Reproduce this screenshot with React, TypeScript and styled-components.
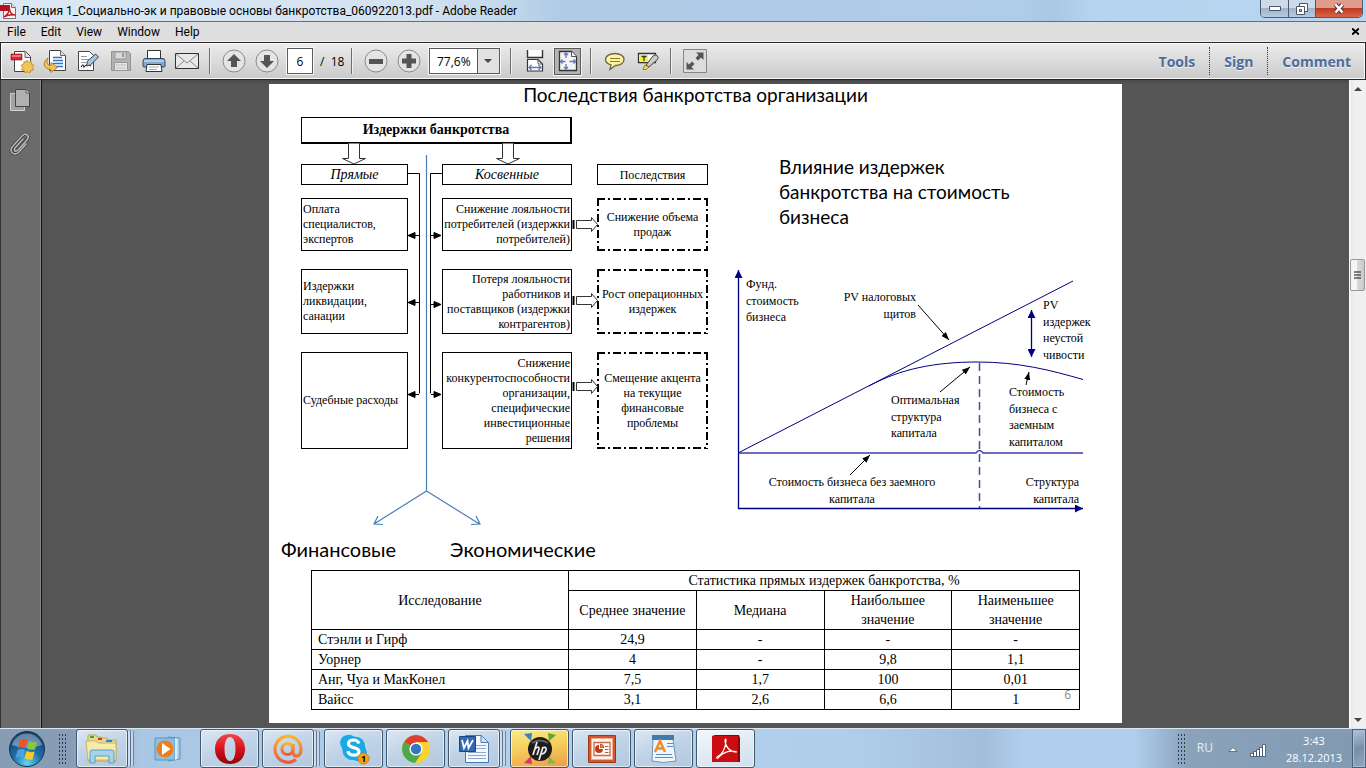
import React from "react";
import styled, { createGlobalStyle, css } from "styled-components";

const ui = `"Open Sans", "Noto Sans", sans-serif`;
const chrome = `Roboto, "Open Sans", sans-serif`;
const slide = `Lato, "Open Sans", sans-serif`;
const serif = `"Liberation Serif", "Times New Roman", serif`;

const GlobalStyle = createGlobalStyle`
  *, *::before, *::after { box-sizing: border-box; }
  body { margin: 0; font-family: ${ui}; font-size: 12px; color: #000; background: #555; }
  button { font: inherit; color: inherit; margin: 0; padding: 0; border: 0; background: none; cursor: pointer; }
  svg { display: block; }
`;

const Window = styled.div`
  display: flex;
  flex-direction: column;
  min-height: 100vh;
`;

/* ---------- Title bar ---------- */

const TitleBar = styled.header`
  display: flex;
  align-items: center;
  height: 22px;
  border-bottom: 1px solid #5d6f85;
  background: linear-gradient(90deg, #dce8f4 0, #d3e2f1 30%, #c3d8ec 37%, #b0cbe6 41%, #afcce9 75%, #a9c8e6 77%, #b6d3ef 80%, #b9d6f1 100%);
`;

const TitleText = styled.h1`
  flex: 1;
  margin: 0 0 0 4px;
  font: 400 12px/20px ${chrome};
  white-space: nowrap;
`;

const Caption = styled.div`
  display: flex;
  align-self: flex-start;
  height: 18px;
  margin-right: 3px;
  border: 1px solid #4b5a6e;
  border-top: 0;
  border-radius: 0 0 5px 5px;
  overflow: hidden;
`;

const CaptionButton = styled.button<{ $close?: boolean }>`
  display: grid;
  place-items: center;
  width: ${(p) => (p.$close ? 47 : 27)}px;
  background: ${(p) =>
    p.$close
      ? "linear-gradient(#dd9c8c 0 45%, #c03a20 50%, #d8664a 100%)"
      : "linear-gradient(#cddae8 0 45%, #a2b4c9 50%, #b8cade 100%)"};
  & + & {
    border-left: 1px solid #4b5a6e;
  }
`;

/* ---------- Menu bar ---------- */

const MenuBar = styled.nav`
  display: flex;
  align-items: center;
  gap: 15px;
  height: 20px;
  padding: 0 7px;
  background: #dedede;
  border-bottom: 1px solid #f0f0f0;
`;

const MenuButton = styled.button`
  font: 12px/18px ${chrome};
  &:last-child {
    margin-left: auto;
  }
`;

/* ---------- Toolbar ---------- */

const ToolBar = styled.div`
  display: flex;
  align-items: center;
  height: 38px;
  padding-left: 4px;
  border: 1px solid #262626;
  box-shadow: inset 0 0 0 1px #fafafa;
  background: linear-gradient(#ececec, #cacaca);
`;

const ToolButton = styled.button<{ $active?: boolean }>`
  display: grid;
  place-items: center;
  width: 33px;
  height: 28px;
  ${(p) =>
    p.$active &&
    css`
      width: 27px;
      height: 27px;
      margin: 0 3px;
      border: 1px solid #5a5a5a;
      outline: 1px solid #f4f4f4;
      background: #b4b4b4;
    `}
`;

const Divider = styled.span`
  width: 2px;
  height: 26px;
  margin: 0 6px;
  background: #6e6e6e;
  border-right: 1px solid #f0f0f0;
`;

const PageField = styled.label`
  display: flex;
  align-items: center;
  width: 58px;
  margin-left: 4px;
  white-space: pre;
`;

const PageInput = styled.input`
  width: 26px;
  height: 26px;
  margin-right: 7px;
  padding: 0;
  border: 1px solid #5a5a5a;
  outline: 1px solid #f8f8f8;
  background: #fff;
  font: 12px ${ui};
  text-align: center;
`;

const ZoomField = styled.span`
  position: relative;
  width: 71px;
  height: 26px;
  margin: 0 4px;
  border: 1px solid #5a5a5a;
  outline: 1px solid #f8f8f8;
  svg {
    position: absolute;
    inset: 0 0 0 auto;
    pointer-events: none;
  }
`;

const ZoomSelect = styled.select`
  appearance: none;
  width: 100%;
  height: 100%;
  padding: 0 22px 0 7px;
  border: 0;
  border-radius: 0;
  background: #fff;
  font: 12px ${ui};
`;

const Panels = styled.div`
  display: flex;
  align-items: center;
  height: 28px;
  margin-left: auto;
`;

const PanelButton = styled.button`
  height: 28px;
  padding: 0 14px;
  font: 700 14px ${ui};
  color: #4c6c9c;
  text-shadow: 0 1px 0 #f4f4f4;
  & + & {
    border-left: 1px dotted #333;
  }
`;

/* ---------- Workspace ---------- */

const Workspace = styled.div`
  display: flex;
  flex: 1;
`;

const Rail = styled.aside`
  display: flex;
  flex-direction: column;
  align-items: center;
  gap: 16px;
  width: 42px;
  padding: 6px 3px 0 0;
  background: #6b6b6b;
  border-left: 1px solid #333;
  border-right: 1px solid #111;
  box-shadow: inset -1px 0 0 #8b8b8b;
`;

const RailButton = styled.button`
  display: grid;
  place-items: center;
  width: 28px;
  height: 28px;
`;

const Viewport = styled.main`
  flex: 1;
  min-width: 0;
  padding: 4px 0 5px;
  background: linear-gradient(#484848 0, #555 4px);
`;

const ScrollBar = styled.div`
  display: flex;
  flex-direction: column;
  width: 17px;
  background: linear-gradient(90deg, #fafafa 0 1px, #e8e8e8 2px, #f0f0f0 6px);
`;

const ScrollButton = styled.button`
  display: grid;
  place-items: center;
  height: 17px;
`;

const Track = styled.div<{ $share: number }>`
  flex: ${(p) => p.$share};
`;

const Thumb = styled.div`
  display: grid;
  place-items: center;
  height: 32px;
  margin: 0 1px;
  border: 1px solid #979797;
  border-radius: 2px;
  background: linear-gradient(90deg, #f5f5f5 0 45%, #d8d8dc 50%, #c8c8ce);
`;

/* ---------- Slide ---------- */

const Slide = styled.article`
  position: relative;
  width: 100%;
  max-width: 853px;
  margin: 0 auto;
  padding-bottom: 13px;
  background: #fff;
`;

const SlideTitle = styled.h2`
  margin: 0 0 12px;
  font: 400 19px/21px ${slide};
  text-align: center;
`;

const Columns = styled.div`
  display: flex;
`;

const Causes = styled.section`
  width: 462px;
  padding-left: 12px;
`;

const Effects = styled.section`
  flex: 1;
`;

const EffectsTitle = styled.h3`
  margin: 37px 0 38px 48px;
  font: 400 19px/25px ${slide};
  width: 250px;
`;

const Flow = styled.div`
  position: relative;
  width: 407px;
  margin: 0 0 88px 20px;
  font: 12px/15px ${serif};
`;

const Connectors = styled.svg`
  position: absolute;
  top: 0;
  left: 0;
  overflow: visible;
`;

const FlowTitle = styled.div`
  width: 271px;
  height: 27px;
  margin-bottom: 20px;
  border: solid #000;
  border-width: 1px 2px 2px 1px;
  font: 700 14px/24px ${serif};
  text-align: center;
`;

const FlowRow = styled.div<{ $height: number; $gap: number }>`
  display: grid;
  grid-template-columns: 107px 139px 111px;
  column-gap: 25px;
  min-height: ${(p) => p.$height}px;
  margin-bottom: ${(p) => p.$gap}px;
`;

const FlowBox = styled.div<{ $align?: "left" | "right" | "center"; $head?: boolean; $dashed?: boolean }>`
  position: relative;
  display: flex;
  flex-direction: column;
  justify-content: center;
  padding: 0 1px;
  border: 1px solid ${(p) => (p.$dashed ? "transparent" : "#000")};
  text-align: ${(p) => p.$align ?? "center"};
  white-space: pre;
  &:nth-child(2) {
    margin-left: 9px;
  }
  ${(p) =>
    p.$head &&
    css`
      font-size: 14px;
      font-style: italic;
      line-height: 18px;
    `}
  &:nth-child(3) {
    font-size: 12px;
    font-style: normal;
  }
`;

const DashFrame = styled.svg`
  position: absolute;
  top: -1px;
  left: -1px;
  width: calc(100% + 2px);
  height: calc(100% + 2px);
`;

const Outcomes = styled.div`
  display: flex;
  gap: 54px;
  font: 20px/24px ${slide};
`;

const Chart = styled.svg`
  font: 12px ${serif};
`;

const Stats = styled.table`
  width: calc(100% - 84px);
  margin: 9px 0 0 42px;
  border-collapse: collapse;
  table-layout: fixed;
  font: 14px/19px ${serif};
  text-align: center;
`;

const Cell = styled.td`
  padding: 0 6px;
  border: 1px solid #000;
`;

const HeadCell = styled.th`
  padding: 0 6px;
  border: 1px solid #000;
  font-weight: 400;
`;

const RowCell = styled(HeadCell)`
  text-align: left;
`;

const FirstCol = styled.col`
  width: 257px;
`;

const SlideNumber = styled.span`
  position: absolute;
  right: 51px;
  bottom: 19px;
  font: 12px/18px ${ui};
  color: #8b8b8b;
`;

/* ---------- Taskbar ---------- */

const TaskBar = styled.footer`
  display: flex;
  align-items: center;
  height: 40px;
  border-top: 1px solid #dbe7f4;
  background: linear-gradient(90deg, #869db5 0, #869db5 70px, #a9c6e3 140px, #b2d0ec 500px, #b0ceeb 62%, #a3bedb 72%, #b0cfee 75%, #b0cfee 83%, #8aa2ba 87%, #8199b1 100%);
`;

const StartButton = styled.button`
  margin: 0 12px 0 8px;
`;

const Grip = styled.span<{ $wide?: boolean }>`
  width: ${(p) => (p.$wide ? 9 : 8)}px;
  height: 31px;
  background: radial-gradient(circle, #2f3d4d 0 1px, transparent 1px) 0 0 / 3px 4px;
`;

const Tasks = styled.div`
  display: flex;
  gap: 3px;
  margin-left: 9px;
`;

const taskTone = {
  normal: "linear-gradient(160deg, #dbe7f3 0, #bfd2e6 50%, #b3c9e1 100%)",
  plain: "none",
  hot: "linear-gradient(170deg, #f8ec86 0, #f6cf5c 45%, #ee9a4c 100%)",
  active: "linear-gradient(160deg, #f3f8fc 0, #dde8f3 60%, #cfdeed 100%)",
};

const TaskButton = styled.button<{ $tone: keyof typeof taskTone; $stack?: boolean }>`
  display: grid;
  place-items: center;
  width: ${(p) => (p.$stack ? 52 : 59)}px;
  height: 39px;
  margin-right: ${(p) => (p.$stack ? 7 : 0)}px;
  border-radius: 3px;
  background: ${(p) => taskTone[p.$tone]};
  ${(p) =>
    p.$tone !== "plain" &&
    css`
      border: 1px solid #42566c;
      box-shadow: inset 0 0 0 1px rgba(255, 255, 255, 0.6)
        ${p.$stack ? ", 3px 0 0 -1px #cfdff0, 4px 0 0 -1px #5d7288, 7px 0 0 -2px #c6d9ec, 8px 0 0 -2px #6f859b" : ""};
    `}
`;

const Tray = styled.div`
  display: flex;
  align-items: center;
  height: 100%;
  margin-left: auto;
  color: #fff;
`;

const Language = styled.button`
  margin: 0 15px 3px 12px;
  color: #e6edf4;
`;

const TrayButton = styled.button`
  margin: 3px 12px 0 0;
`;

const Clock = styled.time`
  width: 60px;
  margin: 0 8px 0 5px;
  line-height: 17px;
  font-size: 11px;
  text-align: center;
`;

const ShowDesktop = styled.button`
  width: 14px;
  height: 100%;
  border: 1px solid #4c6178;
  box-shadow: inset 0 0 0 1px #a9bdd1;
  background: linear-gradient(160deg, #b4c4d5, #7790a9 50%, #8fa8c0);
`;

/* ---------- Toolbar icons ---------- */

const AdobeIcon = () => (
  <svg width="17" height="18" viewBox="0 0 17 18">
    <path d="M3.500 1.500h8l4 4v11h-12z" fill="#fbf4f4" stroke="#8b6a6c" />
    <path d="M11.500 1.500v4h4" fill="#e8dcdc" stroke="#8b6a6c" />
    <path d="M0 3h10v6H0z" fill="#b3131a" />
    <path d="M4 15c3-2 5-4 5.500-8 .5 4 2.500 6 6 6-4-.5-8 0-11.500 2z" fill="none" stroke="#c4161c" strokeWidth="1.400" />
  </svg>
);

const CreateIcon = () => (
  <svg width="24" height="24" viewBox="0 0 24 24">
    <path d="M4.500 2.500h11l5 5v15h-16z" fill="#fff" stroke="#444" />
    <path d="M15 2.500v6h5" fill="#ddd" stroke="#666" />
    <path d="M1 5h11v6H1z" fill="#d8262e" stroke="#8d1218" strokeWidth=".6" />
    <path d="M2 6h9v2H2z" fill="#f0757a" />
    <path d="M17 11l1.500 2.300 2.600-.8.300 2.700 2.600 1-1.500 2.300 1 2.500-2.700.4-.8 2.600-2.500-1.200-2.400 1.200-.8-2.600-2.700-.4 1-2.500-1.500-2.300 2.600-1 .3-2.700 2.600.8z" fill="#f2c65a" stroke="#b9872a" strokeWidth=".8" />
  </svg>
);

const OpenIcon = () => (
  <svg width="24" height="24" viewBox="0 0 24 24">
    <path d="M6.500 1.500h11l5 5v15h-16z" fill="#fff" stroke="#444" />
    <path d="M17.500 1.500v5h5" fill="#ddd" stroke="#666" />
    <path d="M10 8.500h9M10 11.500h10M10 14.500h10M13 17.500h7" stroke="#2f74c8" strokeWidth="1.500" />
    <path d="M5 9c-6 4-5 11 3 11.500v3l6.500-5-6.500-5v3c-4 0-5-3-3-7.500z" fill="#f4c453" stroke="#a87a21" strokeWidth=".9" />
  </svg>
);

const SignIcon = () => (
  <svg width="24" height="24" viewBox="0 0 24 24">
    <path d="M2.500 2.500h11l4 4v15h-15z" fill="#fff" stroke="#444" />
    <path d="M5 7.500h6M5 10.500h8M5 13.500h5" stroke="#999" />
    <path d="M5 18c2-3 2-3 3 0 2-3 4-2 7-1" fill="none" stroke="#222" strokeWidth="1.200" />
    <path d="M10.500 17l1-5 8-7 3 3-8 8z" fill="#a9c4dd" stroke="#345" />
  </svg>
);

const SaveIcon = () => (
  <svg width="22" height="22" viewBox="0 0 22 22">
    <path d="M1.500 1.500h17l2 2v17h-19z" fill="#b3b3b3" stroke="#939393" />
    <path d="M5 2h11v7H5z" fill="#dadada" stroke="#989898" />
    <path d="M12 3h2v4h-2z" fill="#999" />
    <path d="M4.500 12.500h13v8h-13z" fill="#e6e6e6" stroke="#989898" />
    <path d="M6 15h10M6 18h10" stroke="#bbb" />
  </svg>
);

const PrintIcon = () => (
  <svg width="24" height="24" viewBox="0 0 24 24">
    <path d="M5.500 1.500h13v10h-13z" fill="#fff" stroke="#333" />
    <path d="M3 9.500h18q2 0 2 3v4.500q0 1-1 1H2q-1 0-1-1v-4.500q0-3 2-3z" fill="#83a9cb" stroke="#2c4866" />
    <path d="M2 12h20" stroke="#c5dbee" strokeWidth="1.500" />
    <path d="M5 15.500h14l1 7H4z" fill="#fff" stroke="#333" />
    <path d="M7 18h10M7 20.500h8" stroke="#aaa" />
  </svg>
);

const MailIcon = () => (
  <svg width="26" height="18" viewBox="0 0 26 18">
    <path d="M1.500 1.500h23v15h-23z" fill="#e9e9e9" stroke="#333" />
    <path d="M2 2l11 9L24 2M2 16l8-7M24 16l-8-7" fill="none" stroke="#888" />
  </svg>
);

const RoundIcon = ({ d }: { d: string }) => (
  <svg width="24" height="24" viewBox="0 0 24 24">
    <circle cx="12" cy="12" r="11" fill="#e4e4e4" stroke="#8a8a8a" />
    <path d={d} fill="#555" />
  </svg>
);

const ScrollPagesIcon = () => (
  <svg width="18" height="22" viewBox="0 0 18 22">
    <path d="M1 0h16v7H1z" fill="#fff" />
    <path d="M1.500 0v7.500h15V0" fill="none" stroke="#333" strokeWidth="1.400" />
    <path d="M1.500 21v-11.500h10.500l4.500 4.500v7z" fill="#fff" stroke="#333" strokeWidth="1.200" />
    <path d="M12 9.500v4.500h4" fill="none" stroke="#666" />
    <path d="M3 17.500h12M5.500 15L3 17.500 5.500 20M12.500 15l2.500 2.500-2.500 2.500" fill="none" stroke="#5f79b8" strokeWidth="1.300" />
  </svg>
);

const FitPageIcon = () => (
  <svg width="20" height="22" viewBox="0 0 20 22">
    <path d="M1.500 1.500h12l5 5v14h-17z" fill="#f4f4f4" stroke="#333" strokeWidth="1.300" />
    <path d="M13.500 1.500v5h5" fill="#fff" stroke="#555" />
    <path d="M8 3v5M8 14v5M2.500 11.500h5M11.500 11.500h6M6 5l2-2 2 2M6 17l2 2 2-2M4.500 9.500l-2 2 2 2M15.500 9.500l2 2-2 2" fill="none" stroke="#5f79b8" strokeWidth="1.300" />
  </svg>
);

const CommentIcon = () => (
  <svg width="22" height="19" viewBox="0 0 22 19">
    <path d="M11 1.500c5 0 9 2.400 9 6s-4 6-8.500 6L6 17.500l1-4.700C4 12 1.500 10 1.500 7.500c0-3.600 4.500-6 9.500-6z" fill="#fdf3a0" stroke="#6f6640" strokeWidth="1.300" />
    <path d="M6 6.500h10M6 9.500h10" stroke="#8a7a3a" />
  </svg>
);

const HighlightIcon = () => (
  <svg width="22" height="20" viewBox="0 0 22 20">
    <path d="M1.500 2.500h17v9h-17z" fill="#fff" stroke="#333" strokeWidth="1.300" />
    <path d="M3 4h8v7H3z" fill="#fbf13c" />
    <path d="M4.500 5.500h5M7 5v5" stroke="#333" strokeWidth="1.300" />
    <path d="M9 14l7-9q2-2 4-.5t.5 4L12 16z" fill="#c9c9c9" stroke="#444" />
    <path d="M8 14l4 2-3 2.500H6z" fill="#f5e04a" stroke="#7c6b15" strokeWidth=".8" />
  </svg>
);

const FullScreenIcon = () => (
  <svg width="24" height="24" viewBox="0 0 24 24">
    <path d="M.5.5h23v23H.5z" fill="#dcdcdc" stroke="#858585" />
    <path d="M13 3.500h7.500V11l-2.500-2.500-3 3-2.500-2.500 3-3zM11 20.500H3.500V13L6 15.500l3-3 2.500 2.500-3 3z" fill="#555" />
  </svg>
);

const Caret = ({ up }: { up?: boolean }) => (
  <svg width="8" height="4" viewBox="0 0 8 4">
    <path d={up ? "M0 4l4-4 4 4z" : "M0 0l4 4 4-4z"} fill="#444" />
  </svg>
);

/* ---------- Flow chart connectors ---------- */

const downArrows = [47, 201];
const stripedArrows = [108, 184, 270];
const leftTargets = [118, 185, 277];
const rightTargets = [118, 187, 277];

const FlowConnectors = () => (
  <Connectors width="407" height="410" viewBox="0 0 407 410" fill="none" stroke="#000">
    {downArrows.map((x) => (
      <path key={x} transform={`translate(${x} 27)`} d="M.5-.5v15h-6l11.500 5.500 11.500-5.500h-6v-15" fill="#fff" stroke="#333" />
    ))}
    <path d="M107 56.500h11.500v220M141 56.500h-11.500v220" />
    {leftTargets.map((y) => (
      <g key={y}>
        <path d={`M118 ${y + 0.5}h-8`} />
        <path d={`M107 ${y + 0.5}l7-3v6z`} fill="#000" />
      </g>
    ))}
    {rightTargets.map((y) => (
      <g key={y}>
        <path d={`M130 ${y + 0.5}h8`} />
        <path d={`M140 ${y + 0.5}l-7-3v6z`} fill="#000" />
      </g>
    ))}
    {stripedArrows.map((y) => (
      <g key={y} transform={`translate(271 ${y})`}>
        <path d="M4.500-4.500h15v-3l6 7-6 7v-3h-15z" fill="#fff" stroke="#333" />
        <path d="M1.500-5v9" strokeWidth="2" />
      </g>
    ))}
    <path d="M125.500 38v336M125.500 374L73 407M125.500 374l53 33M77 399l-4 8 9 .5M175 399l4 8-9 .5" stroke="#4a7ebb" strokeWidth="1.200" />
  </Connectors>
);

const Dashes = () => (
  <DashFrame stroke="#000" strokeDasharray="8 3 2 3">
    <line x1="0" y1="1" x2="100%" y2="1" strokeWidth="2" />
    <line x1="0" y1="100%" x2="100%" y2="100%" strokeWidth="4" />
    <line x1="1" y1="0" x2="1" y2="100%" strokeWidth="2" />
    <line x1="100%" y1="0" x2="100%" y2="100%" strokeWidth="4" />
  </DashFrame>
);

const flowRows = [
  {
    height: 53,
    gap: 18,
    direct: "Оплата\nспециалистов,\nэкспертов",
    indirect: "Снижение лояльности\nпотребителей (издержки\nпотребителей)",
    result: "Снижение объема\nпродаж",
  },
  {
    height: 65,
    gap: 18,
    direct: "Издержки\nликвидации,\nсанации",
    indirect: "Потеря лояльности\nработников и\nпоставщиков (издержки\nконтрагентов)",
    result: "Рост операционных\nиздержек",
  },
  {
    height: 97,
    gap: 0,
    direct: "Судебные расходы",
    indirect: "Снижение\nконкурентоспособности\nорганизации,\nспецифические\nинвестиционные\nрешения",
    result: "Смещение акцента\nна текущие\nфинансовые\nпроблемы",
  },
];

/* ---------- Value chart ---------- */

type LabelProps = { x: number; y: number; lines: string[]; anchor?: "start" | "middle" | "end" };

const ChartLabel = ({ x, y, lines, anchor = "start" }: LabelProps) => (
  <text textAnchor={anchor}>
    {lines.map((line, i) => (
      <tspan key={line} x={x} y={y + Math.round(i * 16.5)}>
        {line}
      </tspan>
    ))}
  </text>
);

const ValueChart = () => (
  <Chart width="370" height="250" viewBox="0 0 370 250" role="img" aria-label="Влияние издержек банкротства на стоимость бизнеса">
    <defs>
      <marker id="tip" markerWidth="8" markerHeight="6" refX="8" refY="3" orient="auto" markerUnits="userSpaceOnUse">
        <path d="M0 0l8 3-8 3z" />
      </marker>
      <marker id="axis" markerWidth="8" markerHeight="8" refX="8" refY="4" orient="auto-start-reverse" markerUnits="userSpaceOnUse">
        <path d="M0 0l8 4-8 4z" fill="#000080" />
      </marker>
    </defs>
    <g fill="none" stroke="#000080">
      <path d="M7.500 242V3" markerEnd="url(#axis)" strokeWidth="1.300" />
      <path d="M7 241.500h345" markerEnd="url(#axis)" strokeWidth="1.300" />
      <path d="M8 186h237q3.500-5 7 0h100" stroke="#3c3cb0" strokeWidth="1.400" />
      <path d="M8 185.500L342 14" />
      <path d="M138 119c31-17 66-24 108-24s73 8 106 17.500" />
      <path d="M248.500 96v145" stroke="#4a4a9a" strokeWidth="1.500" strokeDasharray="8 5" />
      <path d="M300.500 43v47" markerStart="url(#axis)" markerEnd="url(#axis)" strokeWidth="1.300" />
    </g>
    <g stroke="#000" fill="none">
      <path d="M187 38l31 35" markerEnd="url(#tip)" />
      <path d="M209 125l30-25" markerEnd="url(#tip)" />
      <path d="M295 118l3-13" markerEnd="url(#tip)" />
      <path d="M119 208l20-20" markerEnd="url(#tip)" />
    </g>
    <ChartLabel x={15} y={21} lines={["Фунд.", "стоимость", "бизнеса"]} />
    <ChartLabel x={185} y={34} anchor="end" lines={["PV налоговых", "щитов"]} />
    <ChartLabel x={312} y={42} lines={["PV", "издержек", "неустой", "чивости"]} />
    <ChartLabel x={160} y={137} lines={["Оптимальная", "структура", "капитала"]} />
    <ChartLabel x={278} y={129} lines={["Стоимость", "бизнеса с", "заемным", "капиталом"]} />
    <ChartLabel x={121} y={219} anchor="middle" lines={["Стоимость бизнеса без заемного", "капитала"]} />
    <ChartLabel x={348} y={219} anchor="end" lines={["Структура", "капитала"]} />
  </Chart>
);

const statRows = [
  ["Стэнли и Гирф", "24,9", "-", "-", "-"],
  ["Уорнер", "4", "-", "9,8", "1,1"],
  ["Анг, Чуа и МакКонел", "7,5", "1,7", "100", "0,01"],
  ["Вайсс", "3,1", "2,6", "6,6", "1"],
];

/* ---------- Taskbar icons ---------- */

const StartOrb = () => (
  <svg width="38" height="38" viewBox="0 0 38 38">
    <defs>
      <radialGradient id="orb" cx=".5" cy=".9" r=".9">
        <stop offset="0" stopColor="#5fd8f5" />
        <stop offset=".45" stopColor="#1e6fa8" />
        <stop offset="1" stopColor="#123a63" />
      </radialGradient>
    </defs>
    <circle cx="19" cy="19" r="17.500" fill="url(#orb)" stroke="#16344f" />
    <path d="M4 15a15.500 15.500 0 0 1 30 0q-15 6-30 0z" fill="#fff" opacity=".35" />
    <path d="M12 10q4-2.500 7.500 0l-2 8q-4-2-7.500.5z" fill="#e8562a" />
    <path d="M21 11q4 2 8 .5l-2 8q-4 1-8-1z" fill="#8cc63e" />
    <path d="M9.500 20.500q4-2.500 7.500-.5l-2 8q-4-2-7.500.5z" fill="#4aa3e0" />
    <path d="M18.500 21q4 2 8 .5l-2 8q-4 1-8-1z" fill="#fbc92d" />
  </svg>
);

const ExplorerIcon = () => (
  <svg width="34" height="32" viewBox="0 0 34 32">
    <path d="M3 3q0-1 1-1h7l1 2h4l1 1h5l1 2h7q1 0 1 1v20H3z" fill="#ecd88a" stroke="#bfa655" />
    <path d="M5 3h4v2H5z" fill="#3aa53c" />
    <path d="M13 5h4v2h-4z" fill="#c9362c" />
    <path d="M21 7h6v2h-6z" fill="#2b86c9" />
    <path d="M1 8h10l2 2h17q1 0 1 1v16H3z" fill="#f7eaae" stroke="#cbb363" />
    <path d="M5 19q0-2 2-2h20q2 0 2 2v11h-5v-7H10v7H5z" fill="#a5d3ec" stroke="#5b9cc4" />
  </svg>
);

const MediaIcon = () => (
  <svg width="30" height="28" viewBox="0 0 30 28">
    <path d="M15 2l12 1v21l-12 2z" fill="#9cc8e6" stroke="#5a96c0" />
    <path d="M2 3h20v22H2z" fill="#8ebfe0" stroke="#5a96c0" />
    <path d="M22 3l2.500 1v20l-2.500 1" fill="#d7ebf8" />
    <circle cx="12" cy="14" r="8.500" fill="#f07d1b" />
    <path d="M9 8l8.500 6L9 20z" fill="#fff" />
  </svg>
);

const OperaIcon = () => (
  <svg width="32" height="32" viewBox="0 0 32 32">
    <defs>
      <linearGradient id="opera" x2="0" y2="1">
        <stop offset="0" stopColor="#f4444b" />
        <stop offset=".5" stopColor="#d8101a" />
        <stop offset="1" stopColor="#8f0509" />
      </linearGradient>
    </defs>
    <path fillRule="evenodd" d="M16 1c9 0 15 6 15 15s-6 15-15 15S1 25 1 16 7 1 16 1zm0 3c-4 0-5.500 6-5.500 12S12 28 16 28s5.500-6 5.500-12S20 4 16 4z" fill="url(#opera)" />
  </svg>
);

const MailRuIcon = () => (
  <svg width="32" height="32" viewBox="0 0 32 32">
    <defs>
      <linearGradient id="at" x2="0" y2="1">
        <stop offset="0" stopColor="#fbb52d" />
        <stop offset="1" stopColor="#ea5b3c" />
      </linearGradient>
    </defs>
    <path d="M24 26.500A13 13 0 1 1 29 16c0 5-2 7-4.500 7S21 21 21 18v-7" fill="none" stroke="url(#at)" strokeWidth="3.200" />
    <circle cx="15.500" cy="16" r="5.500" fill="none" stroke="url(#at)" strokeWidth="3.200" />
  </svg>
);

const SkypeIcon = () => (
  <svg width="32" height="32" viewBox="0 0 32 32">
    <path d="M9 1.500q4-1 7 1.500 11 0 12 12 3 5 0 10-5 6-11 3Q4 28 3.500 15 0 10 3 5.500 5 2 9 1.500z" fill="#18a9e6" stroke="#cdeaf9" strokeWidth=".8" />
    <path d="M21 10.500c-1-2.500-3-3.500-5.500-3.500s-5 1.200-5 3.800c0 5 10.500 2.700 10.500 7.700 0 2.500-2.500 3.700-5.300 3.700-3 0-5-1.200-6-4" fill="none" stroke="#fff" strokeWidth="3.200" />
    <circle cx="25.500" cy="25.500" r="5.500" fill="#f9a01b" stroke="#d87b10" />
    <text x="25.500" y="29" textAnchor="middle" fontSize="9" fontWeight="700">1</text>
  </svg>
);

const ChromeIcon = () => (
  <svg width="30" height="30" viewBox="0 0 30 30">
    <circle cx="15" cy="15" r="14" fill="#fcd22f" />
    <path d="M15 15L3 8a14 14 0 0 1 24.200 0H15z" fill="#dd4033" />
    <path d="M2.900 8A14 14 0 0 0 14 29l7-10.500-6-3.500z" fill="#4aa94e" />
    <circle cx="15" cy="15" r="6.600" fill="#fff" />
    <circle cx="15" cy="15" r="5.200" fill="#3576c4" />
  </svg>
);

const WordIcon = () => (
  <svg width="32" height="32" viewBox="0 0 32 32">
    <path d="M7.500 2.500h16l7 7v20h-23z" fill="#f4f8fd" stroke="#4a78b5" />
    <path d="M23 2.500v7h7" fill="#cfe0f4" stroke="#4a78b5" />
    <path d="M18 12.500h10M18 15.500h10M10 19.500h18M10 22.500h18M10 25.500h18" stroke="#8aa9d2" />
    <path d="M1.500 3.500h16v15h-16z" fill="#3468b5" stroke="#1d4285" />
    <path d="M4 7l2 8 3.500-7 1 7L15 7" fill="none" stroke="#fff" strokeWidth="1.800" />
  </svg>
);

const HpIcon = () => (
  <svg width="34" height="34" viewBox="0 0 34 34">
    <path d="M1 2l8-1-1 8z" fill="#2e86c8" />
    <path d="M33 3l-8-2 1 8z" fill="#5aa83b" />
    <path d="M1 31l8 1-1-8z" fill="#d23a6a" />
    <path d="M33 31l-8 1 1-8z" fill="#84b93c" />
    <circle cx="17" cy="17" r="12" fill="#1c1c1c" />
    <path d="M9 11q8-5 16 0" fill="none" stroke="#666" strokeWidth="2" />
    <path d="M14 10l-4 13M12 17q4-4 4 0l-2 6M20 15l-4 13M19 16q5-2 4 2t-5 4" fill="none" stroke="#eee" strokeWidth="1.700" />
  </svg>
);

const SlidesIcon = () => (
  <svg width="30" height="30" viewBox="0 0 30 30">
    <path d="M1.500 1.500h27v27h-27z" fill="#d2572c" stroke="#9c3815" />
    <path d="M4.500 4.500h21v21h-21z" fill="#fff3ec" stroke="#e9b199" />
    <path d="M7 8.500h16v13H7z" fill="#fff" stroke="#cf6844" strokeWidth="1.300" />
    <path d="M12 11a4 4 0 1 0 4 4h-4z" fill="#c23d12" />
    <path d="M13.500 10a4 4 0 0 1 3.500 3.500h-3.500zM18 12.500h3.500M18 15.500h3.500M18 18.500h3.500" fill="#e88b63" stroke="#c4552c" />
  </svg>
);

const WordPadIcon = () => (
  <svg width="28" height="30" viewBox="0 0 28 30">
    <path d="M3 5h20l3 22q-13 3-24 0z" fill="#eef5fb" stroke="#6b93b5" />
    <path d="M2 1h22v5H2z" fill="#3e7ba8" />
    <path d="M17 9.500h6M17 12.500h6M6 20.500h16M5 23.500h18" stroke="#5a8dbb" />
    <path d="M5 18l5-11 5 11M7 14.500h6" fill="none" stroke="#f08a24" strokeWidth="2.400" />
  </svg>
);

const ReaderIcon = () => (
  <svg width="30" height="30" viewBox="0 0 30 30">
    <path d="M1 2l3-1h24l1 3v24H1z" fill="#8b0508" />
    <path d="M1 2h26v26H1z" fill="#c90d12" />
    <path d="M6 23c5-2 9-9 9-17q0-2-1 0c0 6 4 12 12 12-7-2-14 0-18 5-1 2-3 2-2 0z" fill="none" stroke="#fff" strokeWidth="1.200" />
  </svg>
);

const tasks: { name: string; tone: keyof typeof taskTone; stack?: boolean; icon: React.ReactNode }[] = [
  { name: "Explorer", tone: "normal", stack: true, icon: <ExplorerIcon /> },
  { name: "Media Player", tone: "plain", icon: <MediaIcon /> },
  { name: "Opera", tone: "normal", icon: <OperaIcon /> },
  { name: "Mail", tone: "normal", stack: true, icon: <MailRuIcon /> },
  { name: "Skype", tone: "normal", icon: <SkypeIcon /> },
  { name: "Chrome", tone: "normal", icon: <ChromeIcon /> },
  { name: "Word", tone: "normal", stack: true, icon: <WordIcon /> },
  { name: "HP", tone: "hot", icon: <HpIcon /> },
  { name: "PowerPoint", tone: "normal", icon: <SlidesIcon /> },
  { name: "WordPad", tone: "normal", icon: <WordPadIcon /> },
  { name: "Adobe Reader", tone: "active", icon: <ReaderIcon /> },
];

export default function App() {
  return (
    <Window>
      <GlobalStyle />

      <TitleBar>
        <AdobeIcon />
        <TitleText>Лекция 1_Социально-эк и правовые основы банкротства_060922013.pdf - Adobe Reader</TitleText>
        <Caption>
          <CaptionButton aria-label="Minimize">
            <svg width="12" height="5" viewBox="0 0 12 5">
              <path d="M.5.5h11v4H.5z" fill="#fff" stroke="#4a5568" />
            </svg>
          </CaptionButton>
          <CaptionButton aria-label="Restore">
            <svg width="12" height="12" viewBox="0 0 12 12" fill="#fff" stroke="#4a5568">
              <path d="M3.500.5h8v8h-8z" />
              <path d="M.5 3.500h8v8h-8z" />
              <path d="M3.500 6.500h2v2h-2z" fill="#9fb1c6" />
            </svg>
          </CaptionButton>
          <CaptionButton $close aria-label="Close">
            <svg width="12" height="11" viewBox="0 0 12 11">
              <path d="M2.500 1.500l7 8M9.500 1.500l-7 8" stroke="#54333a" strokeWidth="4.500" />
              <path d="M2.500 1.500l7 8M9.500 1.500l-7 8" stroke="#fff" strokeWidth="2.500" />
            </svg>
          </CaptionButton>
        </Caption>
      </TitleBar>

      <MenuBar>
        {["File", "Edit", "View", "Window", "Help"].map((item) => (
          <MenuButton key={item}>{item}</MenuButton>
        ))}
        <MenuButton aria-label="Close document">
          <svg width="7" height="7" viewBox="0 0 7 7">
            <path d="M0 .5l7 6M7 .5l-7 6" stroke="#000" strokeWidth="2" />
          </svg>
        </MenuButton>
      </MenuBar>

      <ToolBar role="toolbar">
        <ToolButton aria-label="Create PDF"><CreateIcon /></ToolButton>
        <ToolButton aria-label="Open"><OpenIcon /></ToolButton>
        <ToolButton aria-label="Fill and sign"><SignIcon /></ToolButton>
        <ToolButton aria-label="Save"><SaveIcon /></ToolButton>
        <ToolButton aria-label="Print"><PrintIcon /></ToolButton>
        <ToolButton aria-label="Send by mail"><MailIcon /></ToolButton>
        <Divider />
        <ToolButton aria-label="Previous page"><RoundIcon d="M12 5l7 7h-4v6H9v-6H5z" /></ToolButton>
        <ToolButton aria-label="Next page"><RoundIcon d="M12 19l7-7h-4V6H9v6H5z" /></ToolButton>
        <PageField>
          <PageInput aria-label="Page" defaultValue="6" />
          {"/  18"}
        </PageField>
        <Divider />
        <ToolButton aria-label="Zoom out"><RoundIcon d="M5 10h14v5H5z" /></ToolButton>
        <ToolButton aria-label="Zoom in"><RoundIcon d="M9.500 5h5v4.500H19v5h-4.500V19h-5v-4.500H5v-5h4.500z" /></ToolButton>
        <ZoomField>
          <ZoomSelect aria-label="Zoom" defaultValue="77,6%">
            <option>77,6%</option>
            <option>100%</option>
          </ZoomSelect>
          <svg width="22" height="24" viewBox="0 0 22 24">
            <path d="M0 0h22v24H0z" fill="#e2e2e2" />
            <path d="M.5 0v24" stroke="#5a5a5a" />
            <path d="M7 10l4 4 4-4z" fill="#444" />
          </svg>
        </ZoomField>
        <Divider />
        <ToolButton aria-label="Scrolling pages"><ScrollPagesIcon /></ToolButton>
        <ToolButton $active aria-label="Fit page"><FitPageIcon /></ToolButton>
        <Divider />
        <ToolButton aria-label="Add comment"><CommentIcon /></ToolButton>
        <ToolButton aria-label="Highlight text"><HighlightIcon /></ToolButton>
        <Divider />
        <ToolButton aria-label="Full screen"><FullScreenIcon /></ToolButton>
        <Panels>
          <PanelButton>Tools</PanelButton>
          <PanelButton>Sign</PanelButton>
          <PanelButton>Comment</PanelButton>
        </Panels>
      </ToolBar>

      <Workspace>
        <Rail>
          <RailButton aria-label="Page thumbnails">
            <svg width="22" height="24" viewBox="0 0 22 24">
              <path d="M1.500 5.500h14v17h-14z" fill="#a2a2a2" stroke="#d0d0d0" />
              <path d="M6.500 1.500h11l3 3v14h-14z" fill="#b0b0b0" stroke="#444" />
              <path d="M17 1.500v3.500h3.500" fill="#ddd" stroke="#555" />
            </svg>
          </RailButton>
          <RailButton aria-label="Attachments">
            <svg width="22" height="24" viewBox="0 0 22 24" fill="none" strokeLinecap="round">
              <path d="M14 7l-8 9c-2 3 1 4 3 2l9-10c3-4-1-8-5-4l-9 10c-5 5 1 11 6 6l7-8" stroke="#3c3c3c" strokeWidth="3" />
              <path d="M14 7l-8 9c-2 3 1 4 3 2l9-10c3-4-1-8-5-4l-9 10c-5 5 1 11 6 6l7-8" stroke="#b5b5b5" strokeWidth="1.700" />
            </svg>
          </RailButton>
        </Rail>

        <Viewport>
          <Slide>
            <SlideTitle>Последствия банкротства организации</SlideTitle>
            <Columns>
              <Causes>
                <Flow>
                  <FlowTitle>Издержки банкротства</FlowTitle>
                  <FlowRow $height={21} $gap={13}>
                    <FlowBox $head>Прямые</FlowBox>
                    <FlowBox $head>Косвенные</FlowBox>
                    <FlowBox $head>Последствия</FlowBox>
                  </FlowRow>
                  {flowRows.map((row) => (
                    <FlowRow key={row.height} $height={row.height} $gap={row.gap}>
                      <FlowBox $align="left">{row.direct}</FlowBox>
                      <FlowBox $align="right">{row.indirect}</FlowBox>
                      <FlowBox $dashed>
                        {row.result}
                        <Dashes />
                      </FlowBox>
                    </FlowRow>
                  ))}
                  <FlowConnectors />
                </Flow>
                <Outcomes>
                  <span>Финансовые</span>
                  <span>Экономические</span>
                </Outcomes>
              </Causes>
              <Effects>
                <EffectsTitle>Влияние издержек банкротства на стоимость бизнеса</EffectsTitle>
                <ValueChart />
              </Effects>
            </Columns>
            <Stats>
              <colgroup>
                <FirstCol />
                <col span={4} />
              </colgroup>
              <thead>
                <tr>
                  <HeadCell rowSpan={2}>Исследование</HeadCell>
                  <HeadCell colSpan={4}>Статистика прямых издержек банкротства, %</HeadCell>
                </tr>
                <tr>
                  <HeadCell>Среднее значение</HeadCell>
                  <HeadCell>Медиана</HeadCell>
                  <HeadCell>Наибольшее значение</HeadCell>
                  <HeadCell>Наименьшее значение</HeadCell>
                </tr>
              </thead>
              <tbody>
                {statRows.map(([name, ...values]) => (
                  <tr key={name}>
                    <RowCell scope="row">{name}</RowCell>
                    {values.map((value, i) => (
                      <Cell key={i}>{value}</Cell>
                    ))}
                  </tr>
                ))}
              </tbody>
            </Stats>
            <SlideNumber>6</SlideNumber>
          </Slide>
        </Viewport>

        <ScrollBar>
          <ScrollButton aria-label="Scroll up"><Caret up /></ScrollButton>
          <Track $share={162} />
          <Thumb>
            <svg width="7" height="8" viewBox="0 0 7 8">
              <path d="M0 1h7M0 4h7M0 7h7" stroke="#555" strokeWidth="1.500" />
            </svg>
          </Thumb>
          <Track $share={420} />
          <ScrollButton aria-label="Scroll down"><Caret /></ScrollButton>
        </ScrollBar>
      </Workspace>

      <TaskBar>
        <StartButton aria-label="Start"><StartOrb /></StartButton>
        <Grip $wide />
        <Tasks>
          {tasks.map((task) => (
            <TaskButton key={task.name} $tone={task.tone} $stack={task.stack} aria-label={task.name}>
              {task.icon}
            </TaskButton>
          ))}
        </Tasks>
        <Tray>
          <Grip />
          <Language>RU</Language>
          <TrayButton aria-label="Show hidden icons">
            <svg width="10" height="6" viewBox="0 0 10 6">
              <path d="M1 4.500l4-4 4 4z" fill="#fff" stroke="#3d4f63" strokeWidth=".7" />
            </svg>
          </TrayButton>
          <TrayButton aria-label="Network">
            <svg width="17" height="13" viewBox="0 0 17 13" fill="#fff" stroke="#3d4f63" strokeWidth=".8">
              <path d="M.5 9.500h3v3h-3zM3.500 7.500h3v5h-3zM6.500 5.500h3v7h-3zM9.500 3.500h3v9h-3zM12.500.5h3v12h-3z" />
            </svg>
          </TrayButton>
          <Clock>
            3:43
            <br />
            28.12.2013
          </Clock>
          <ShowDesktop aria-label="Show desktop" />
        </Tray>
      </TaskBar>
    </Window>
  );
}
